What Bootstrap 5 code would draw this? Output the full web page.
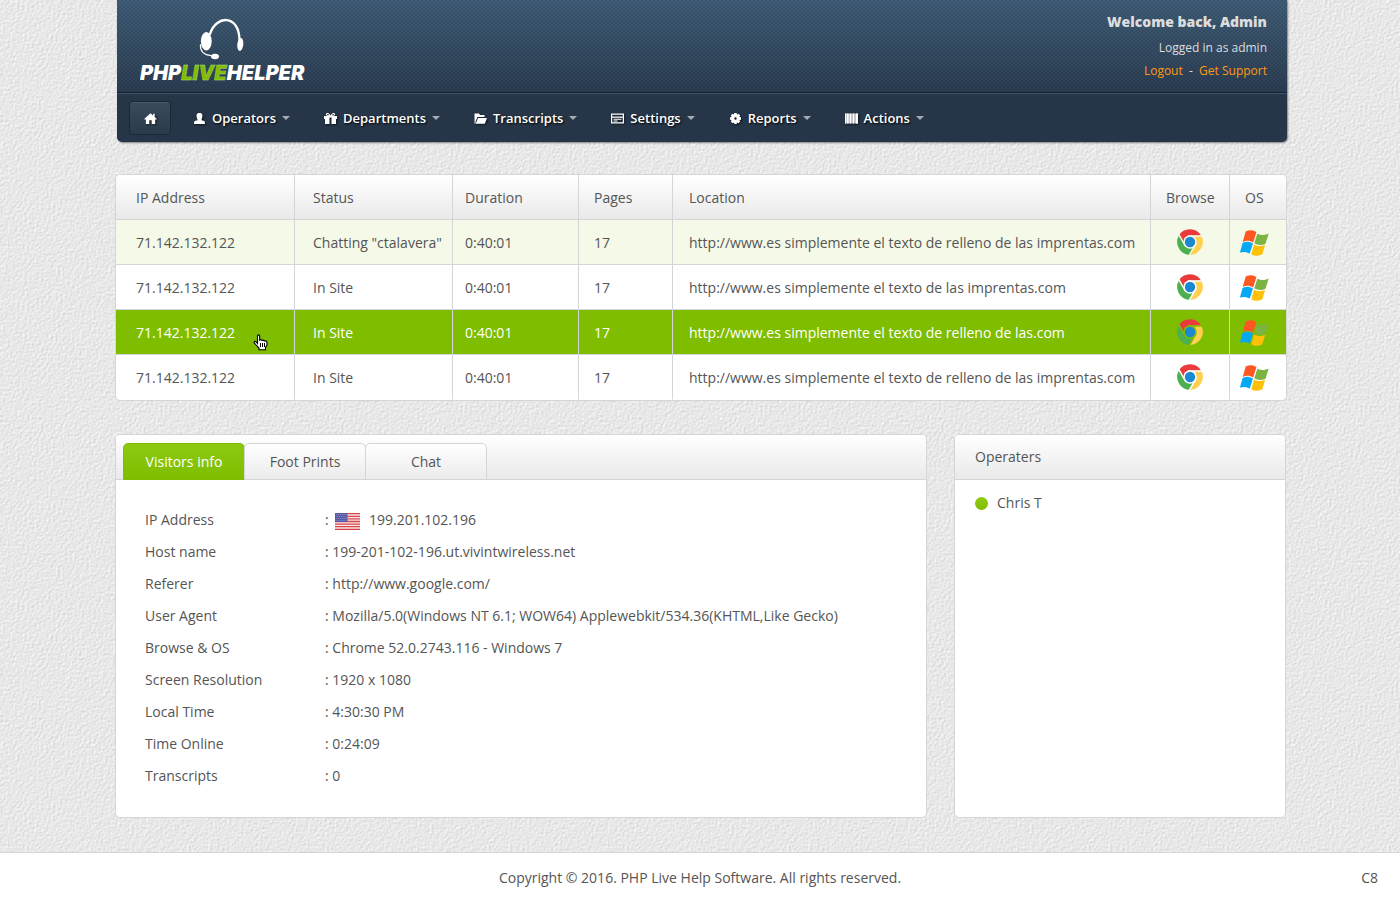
<!DOCTYPE html>
<html lang="en">
<head>
<meta charset="utf-8">
<meta name="viewport" content="width=device-width, initial-scale=1">
<title>PHP Live Helper</title>
<link rel="stylesheet" href="https://cdn.jsdelivr.net/npm/bootstrap@5.3.0/dist/css/bootstrap.min.css">
<style>
  body {
    font-family: "Open Sans", "Noto Sans", sans-serif;
    font-size: 14px;
    line-height: 20px;
    color: #555;
    background: #e7e7e7 url("data:image/svg+xml,%3Csvg xmlns='http://www.w3.org/2000/svg' width='300' height='300'%3E%3Cfilter id='p' x='0' y='0' width='100%25' height='100%25' color-interpolation-filters='sRGB'%3E%3CfeTurbulence type='fractalNoise' baseFrequency='.42' numOctaves='3' seed='4' stitchTiles='stitch'/%3E%3CfeDiffuseLighting lighting-color='%23fff' surfaceScale='.25' diffuseConstant='1.11'%3E%3CfeDistantLight azimuth='225' elevation='55'/%3E%3C/feDiffuseLighting%3E%3C/filter%3E%3Crect width='300' height='300' filter='url(%23p)'/%3E%3C/svg%3E");
  }
  .page-wrap { max-width: 1174px; padding-left: 2px; }
  .site-header {
    margin-left: 2px;
    border-radius: 0 0 5px 5px;
    background: #263648;
    box-shadow: 1px 1px 2px rgba(0, 0, 0, .45);
  }
  .brand-bar {
    height: 93px;
    padding: 0 20px 0 23px;
    border-bottom: 1px solid #15202b;
    background:
      radial-gradient(circle at 1px 1px, rgba(20, 35, 55, .2) 1px, transparent 1px) 0 0 / 4px 4px,
      radial-gradient(circle at 1px 1px, rgba(20, 35, 55, .2) 1px, transparent 1px) 2px 2px / 4px 4px,
      linear-gradient(#416079, #2c3d51);
  }
  .brand-link { padding-top: 16px; }
  .account { font-size: 12px; line-height: 23px; color: #ddd; padding-top: 10px; }
  .account strong { font-size: 14px; font-weight: 800; line-height: 24px; margin-bottom: 2px; }
  .account a { color: #ff9913; text-decoration: none; }
  .main-nav {
    height: 49px;
    border-top: 1px solid #3c546d;
    padding: 0 12px;
    gap: 34px;
  }
  .main-nav .btn {
    color: #fff;
    font-size: 13px;
    line-height: 20px;
    font-weight: 600;
    text-shadow: 1px 1px 2px #000;
    border: 0;
    padding: 0;
  }
  .main-nav .btn svg { width: 13px; height: 13px; margin-right: 6px; fill: currentColor; filter: drop-shadow(1px 1px 1px rgba(0, 0, 0, .6)); }
  .main-nav .dropdown-toggle::after { border-width: 4px 4px 0; color: #a3abb3; margin-left: 6px; }
  .main-nav .home-btn {
    display: flex;
    align-items: center;
    justify-content: center;
    width: 42px;
    height: 34px;
    margin-right: -12px;
    border: 1px solid #1b2835;
    border-radius: 4px;
    background: linear-gradient(#3a4b5c, #2a3b4c);
    box-shadow: inset 0 1px 0 #46586a;
  }
  .main-nav .home-btn svg { margin: 0; }

  .panel { background: #fff; border: 1px solid #d4d5d7; border-radius: 5px; }
  .panel-head { height: 45px; border-bottom: 1px solid #d4d5d7; background: linear-gradient(#fff, #e9e9e9); border-radius: 4px 4px 0 0; }

  .visitors { margin-top: 32px; }
  .visitors table { table-layout: fixed; border-collapse: separate; border-spacing: 0; width: 100%; }
  .visitors th, .visitors td { height: 45px; padding: 2px 0 0 16px; font-weight: 400; white-space: nowrap; border: solid #d4d5d7; border-width: 0 1px 1px 0; }
  .visitors thead tr { background: linear-gradient(#fff, #e9e9e9); }
  .visitors tr > :first-child { padding-left: 20px; }
  .visitors tr > :nth-child(2) { padding-left: 18px; }
  .visitors tr > :nth-child(3) { padding-left: 12px; }
  .visitors tr > :nth-child(4), .visitors tr > :nth-child(6), .visitors tr > :nth-child(7) { padding-left: 15px; }
  .visitors tr > :last-child { border-right: 0; }
  .visitors tbody tr:last-child > * { border-bottom-color: transparent; }
  .visitors tbody td:nth-child(6), .visitors tbody td:nth-child(7) { padding: 0; text-align: center; }
  .visitors tbody td:nth-child(7) { padding: 2px 8px 0 0; }
  .visitors .chatting { background: #f4f9e8; }
  .visitors .hovered { background: #7fbd00; color: #fff; }
  .visitors svg { display: inline-block; }
  .pointer { right: 26px; top: 24px; }

  .lower { margin-top: 33px; margin-right: 1px; gap: 27px; }
  .lower .panel { height: 384px; }
  .side-panel { width: 332px; }
  .side-panel .panel-head { padding: 0 20px; }
  .tab-row { padding: 8px 0 0 7px; }
  .tab-row button {
    width: 122px;
    height: 37px;
    padding: 0;
    margin-right: -1px;
    color: #555;
    border: 1px solid #d4d5d7;
    border-radius: 5px 5px 0 0;
    background: linear-gradient(#fff, #ebebeb);
  }
  .tab-row button.active { color: #fff; border-color: #7fbd00; background: linear-gradient(#8cca12, #7fbd00); }
  .info { margin: 24px 29px 0; }
  .info th { width: 180px; font-weight: 400; }
  .info th, .info td { height: 32px; padding: 0; vertical-align: middle; }
  .info svg { margin: 0 5px 0 3px; }
  .operator { padding: 13px 20px; gap: 9px; }
  .online { width: 13px; height: 13px; border-radius: 50%; background: linear-gradient(#90cc16, #7fbd00); }
  .site-footer { margin-top: 34px; padding: 15px 22px 16px; background: #fff; border-top: 1px solid #d4d5d7; }
</style>
</head>
<body>
<svg width="0" height="0" class="position-absolute" aria-hidden="true">
  <defs>
    <mask id="chrome-gaps">
      <rect width="26" height="26" fill="#fff"/>
      <circle cx="13" cy="13" r="6.7"/>
      <g stroke="#000" stroke-width="1.5">
        <path id="gap" d="M11 7H26"/>
        <use href="#gap" transform="rotate(120 13 13)"/>
        <use href="#gap" transform="rotate(240 13 13)"/>
      </g>
    </mask>
    <symbol id="chrome" viewBox="0 0 26 26">
      <g mask="url(#chrome-gaps)">
        <path fill="#eb3a3c" d="M1.8 6.6A13 13 0 0 1 24.4 7H13A6 6 0 0 0 7.8 16Z"/>
        <path fill="#ffd04f" transform="rotate(120 13 13)" d="M1.8 6.6A13 13 0 0 1 24.4 7H13A6 6 0 0 0 7.8 16Z"/>
        <path fill="#4caf50" transform="rotate(240 13 13)" d="M1.8 6.6A13 13 0 0 1 24.4 7H13A6 6 0 0 0 7.8 16Z"/>
      </g>
      <circle cx="13" cy="13" r="5.2" fill="#1c88d4"/>
    </symbol>
    <symbol id="windows" viewBox="0 0 29 26">
      <path fill="#ff5722" d="M5.7 1.5C9.300-.3 12.600-.3 16.400 1.900L13.200 12.400C9.800 10.500 6.500 10.300 2.700 11.900Z"/>
      <path fill="#7cb342" d="M17.300 3.700C21 5.500 24.500 5.600 28.700 3.600L25.500 13.700C21.800 15.400 18.200 15.400 14.300 13.300Z"/>
      <path fill="#03a9f4" d="M2.600 12.900C6.300 11.300 9.500 11.500 12.900 13.500L9.800 23.600C6.500 21.700 3.500 21.500-.1 22.600Z"/>
      <path fill="#ffc107" d="M14 14.500C17.600 16.500 21.200 16.500 25.100 15L22.200 24.600C18.600 26.200 15 26.200 11.300 24.200Z"/>
    </symbol>
  </defs>
</svg>

<div class="page-wrap mx-auto">
  <header class="site-header">
    <div class="brand-bar d-flex justify-content-between">
      <a class="brand-link" href="#" aria-label="PHP Live Helper">
        <svg width="170" height="68" viewBox="0 0 170 68">
          <g fill="none" stroke="#fff" stroke-linecap="round">
            <path stroke-width="2.400" d="M70 18C76-1 99-2 99.500 24"/>
            <path stroke-width="1.300" d="M60.500 29C60 35 64 39 71 39.700"/>
          </g>
          <g fill="#fff">
            <ellipse cx="66.300" cy="25.300" rx="5.400" ry="9.200"/>
            <ellipse cx="100.300" cy="28.500" rx="3" ry="6.500" transform="rotate(6 100.300 28.500)"/>
            <ellipse cx="75" cy="40.500" rx="4" ry="2.700"/>
          </g>
          <text x="0" y="64" font-family="Inter" font-size="20" font-weight="900" font-style="italic" fill="#fff">PHP<tspan fill="#7fbd00" stroke="#b9dd7a" stroke-width=".4">LIVE</tspan>HELPER</text>
        </svg>
      </a>
      <div class="account text-end d-flex flex-column">
        <strong>Welcome back, Admin</strong>
        <span>Logged in as admin</span>
        <span><a href="#">Logout</a>&nbsp; - &nbsp;<a href="#">Get Support</a></span>
      </div>
    </div>
    <nav class="main-nav d-flex align-items-center">
      <button type="button" class="btn home-btn" aria-label="Home"><svg viewBox="0 0 14 13"><path d="M7 .8 9.800 3.300V1.500H11.500V4.900L13.800 7 13 7.900 12 7.200V12.300H8.300V8.500H5.700V12.300H2V7.200L1 7.900.2 7Z"/></svg></button>
      <button type="button" class="btn dropdown-toggle d-flex align-items-center"><svg viewBox="0 0 13 13"><path d="M6.500 1C9.300 1 9.800 3 9.200 5.300 8.900 6.800 8.500 7.300 8.500 8.200L11.300 9Q12 9.500 12 12H1Q1 9.500 1.700 9L4.500 8.200C4.500 7.300 4.100 6.800 3.800 5.300 3.200 3 3.700 1 6.500 1Z"/></svg>Operators</button>
      <button type="button" class="btn dropdown-toggle d-flex align-items-center"><svg viewBox="0 0 13 13"><path fill-rule="evenodd" d="M0 4H4C1 3.500 1.500 1 3.500 1 5 1 6 2.500 6.500 3.500 7 2.500 8 1 9.500 1 11.500 1 12 3.500 9 4H13V7H12V12H7.500V5.500H5.500V12H1V7H0ZM3 2.200 3.500 3.200H5.200Q4 1.700 3 2.200ZM10 2.200Q9 1.700 7.800 3.200H9.500Z"/></svg>Departments</button>
      <button type="button" class="btn dropdown-toggle d-flex align-items-center"><svg viewBox="0 0 13 13"><path d="M.5 1.500H5L6 3H10.500V5H3.500L1.500 9.500V11.500H.5Z"/><path d="M4 6H13L10.800 11.800H1.700Z"/></svg>Transcripts</button>
      <button type="button" class="btn dropdown-toggle d-flex align-items-center"><svg viewBox="0 0 13 13"><path fill-rule="evenodd" d="M0 1.500H13V11.500H0ZM1.200 2.700V4.500H11.800V2.700ZM1.200 5.700V10.300H11.800V5.700Z"/><path d="M2.500 6.700H10.500V7.700H2.500ZM2.500 8.500H6.500V9.500H2.500Z"/></svg>Settings</button>
      <button type="button" class="btn dropdown-toggle d-flex align-items-center"><svg viewBox="0 0 13 13"><path fill-rule="evenodd" d="M5.300 1H7.700L8 2.500 9.500 1.700 11.200 3.400 10.400 4.900 12 5.300V7.700L10.400 8.100 11.200 9.600 9.500 11.300 8 10.500 7.700 12H5.300L5 10.500 3.500 11.300 1.800 9.600 2.600 8.100 1 7.700V5.300L2.600 4.900 1.800 3.400 3.500 1.700 5 2.500ZM6.500 5.300A1.200 1.200 0 1 0 6.500 7.700 1.200 1.200 0 1 0 6.500 5.300Z"/></svg>Reports</button>
      <button type="button" class="btn dropdown-toggle d-flex align-items-center"><svg viewBox="0 0 13 13"><path opacity=".75" d="M0 1.500H13V11.500H0Z"/><path d="M0 1.500H1V11.500H0ZM2 1.500H3.500V11.500H2ZM5 1.500H6V11.500H5ZM8 1.500H9V11.500H8ZM11 1.500H13V11.500H11Z"/></svg>Actions</button>
    </nav>
  </header>

  <main>
    <section class="panel visitors overflow-hidden">
      <table>
        <colgroup><col style="width:179px"><col style="width:158px"><col style="width:126px"><col style="width:94px"><col><col style="width:79px"><col style="width:56px"></colgroup>
        <thead>
          <tr><th scope="col">IP Address</th><th scope="col">Status</th><th scope="col">Duration</th><th scope="col">Pages</th><th scope="col">Location</th><th scope="col">Browse</th><th scope="col">OS</th></tr>
        </thead>
        <tbody>
          <tr class="chatting"><td>71.142.132.122</td><td>Chatting "ctalavera"</td><td>0:40:01</td><td>17</td><td>http://www.es simplemente el texto de relleno de las imprentas.com</td><td><svg width="26" height="26"><use href="#chrome"/></svg></td><td><svg width="29" height="26"><use href="#windows"/></svg></td></tr>
          <tr><td>71.142.132.122</td><td>In Site</td><td>0:40:01</td><td>17</td><td>http://www.es simplemente el texto de las imprentas.com</td><td><svg width="26" height="26"><use href="#chrome"/></svg></td><td><svg width="29" height="26"><use href="#windows"/></svg></td></tr>
          <tr class="hovered"><td class="position-relative">71.142.132.122<svg class="pointer position-absolute" width="15" height="17" viewBox="0 0 15 17"><path fill="#fff" stroke="#000" stroke-width="1.100" d="M4.500 9.500V2Q5.500-.3 6.700 2V6.200Q7.800 5 9 6.500 10.300 5.500 11.300 7 13.500 6.300 14 8.500V11L12.500 13.500V15.800H6V14L3.500 11.500 1 8.500Q1.500 6.300 3.300 8Z"/><path stroke="#000" d="M7.500 9V13M9.500 9V13M11.500 9V13"/></svg></td><td>In Site</td><td>0:40:01</td><td>17</td><td>http://www.es simplemente el texto de relleno de las.com</td><td><svg width="26" height="26"><use href="#chrome"/></svg></td><td><svg width="29" height="26"><use href="#windows"/></svg></td></tr>
          <tr><td>71.142.132.122</td><td>In Site</td><td>0:40:01</td><td>17</td><td>http://www.es simplemente el texto de relleno de las imprentas.com</td><td><svg width="26" height="26"><use href="#chrome"/></svg></td><td><svg width="29" height="26"><use href="#windows"/></svg></td></tr>
        </tbody>
      </table>
    </section>

    <div class="lower d-flex">
      <section class="panel flex-grow-1">
        <div class="panel-head tab-row d-flex" role="tablist">
          <button type="button" role="tab" class="active" aria-selected="true">Visitors info</button>
          <button type="button" role="tab" aria-selected="false">Foot Prints</button>
          <button type="button" role="tab" aria-selected="false">Chat</button>
        </div>
        <table class="info">
          <tr><th scope="row">IP Address</th><td>: <svg width="25" height="17" viewBox="0 0 26 17" preserveAspectRatio="none" aria-label="United States"><path fill="#f6e9e9" d="M0 0H26V17H0Z"/><path stroke="#d9444a" stroke-width="1.300" d="M0 .65H26M0 3.300H26M0 5.900H26M0 8.500H26M0 11.100H26M0 13.700H26M0 16.350H26"/><path fill="#5a5aa8" d="M0 0H13V9H0Z"/><path stroke="#9a9ad0" stroke-width=".8" stroke-dasharray="1 1" d="M1 1.500H12M2 3.500H12M1 5.500H12M2 7.500H12"/></svg> 199.201.102.196</td></tr>
          <tr><th scope="row">Host name</th><td>: 199-201-102-196.ut.vivintwireless.net</td></tr>
          <tr><th scope="row">Referer</th><td>: http://www.google.com/</td></tr>
          <tr><th scope="row">User Agent</th><td>: Mozilla/5.0(Windows NT 6.1; WOW64) Applewebkit/534.36(KHTML,Like Gecko)</td></tr>
          <tr><th scope="row">Browse &amp; OS</th><td>: Chrome 52.0.2743.116 - Windows 7</td></tr>
          <tr><th scope="row">Screen Resolution</th><td>: 1920 x 1080</td></tr>
          <tr><th scope="row">Local Time</th><td>: 4:30:30 PM</td></tr>
          <tr><th scope="row">Time Online</th><td>: 0:24:09</td></tr>
          <tr><th scope="row">Transcripts</th><td>: 0</td></tr>
        </table>
      </section>
      <aside class="panel side-panel flex-shrink-0">
        <div class="panel-head d-flex align-items-center">Operaters</div>
        <div class="operator d-flex align-items-center"><span class="online"></span>Chris T</div>
      </aside>
    </div>
  </main>
</div>

<footer class="site-footer d-flex">
  <span class="col"></span>
  <span>Copyright © 2016. PHP Live Help Software. All rights reserved.</span>
  <span class="col text-end">C8</span>
</footer>
<script src="https://cdn.jsdelivr.net/npm/bootstrap@5.3.0/dist/js/bootstrap.bundle.min.js"></script>
</body>
</html>
